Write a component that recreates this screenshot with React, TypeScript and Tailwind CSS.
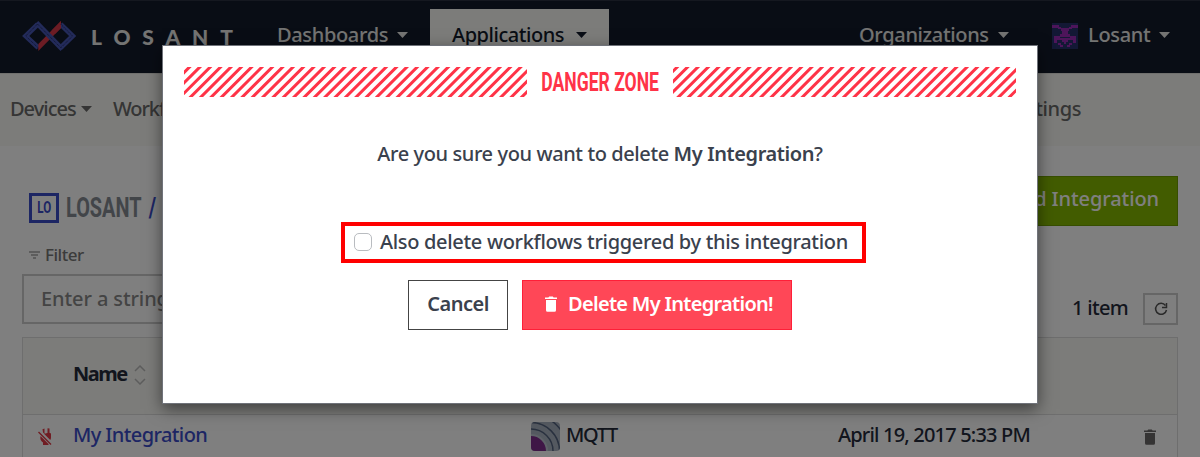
import type { ReactNode } from 'react';

function Caret({ className = '' }: { className?: string }) {
  return (
    <svg viewBox="0 0 11 6" className={`h-[6px] w-[11px] shrink-0 ${className}`} fill="currentColor">
      <path d="M0 0h11L5.5 6z" />
    </svg>
  );
}

function Logo() {
  return (
    <svg width="54" height="32" viewBox="22 20 54 32" className="shrink-0" fill="none">
      <g stroke="#4656b4" strokeWidth="5">
        <path d="M37.8 24.2 25.7 36l12.6 11.8" strokeLinejoin="miter" />
        <path d="M60.6 24.2 72.6 36 60.6 47.8" />
      </g>
      <path d="M61 21v7L38.3 51v-7z" fill="#d83848" />
      <path d="M36.5 22.8 62.3 49.2" stroke="#4656b4" strokeWidth="5" />
      <path d="m51.500 30.600 9.500-9.600v7l-6 6z" fill="#d83848" />
      <g stroke="#1a2356" strokeWidth="1" strokeDasharray="1 1">
        <path d="M37.5 24 25.7 36l12.6 12M60.6 24 72.6 36 60.6 48M37.5 24 61 48" />
      </g>
    </svg>
  );
}

function Avatar() {
  return (
    <svg width="26" height="26" viewBox="0 0 26 26" className="mt-[22px] shrink-0" fill="#9a2ab4">
      <path d="M0 0h26v26H0z" fill="#26306b" />
      <path d="M0 2h7v3H0zM19 2h7v3h-7zM6 4h3v2H6zM17 4h3v2h-3zM9 5h8v3H9zM10 8h6v4h-6zM8 11h10v3H8zM2 13h6v3H2zM18 13h6v3h-6zM5 15h16v2H5zM2 16h3v4H2zM21 16h3v4h-3zM10 17h6v2h-6zM6 20h3v2H6zM17 20h3v2h-3zM8 22h3v2H8zM15 22h3v2h-3zM12 19h2v2h-2z" />
    </svg>
  );
}

function Trash({ className = '' }: { className?: string }) {
  return (
    <svg viewBox="0 0 14 16" className={className} fill="currentColor">
      <path d="M1 1.4h3.4L5.2.4h3.6l.8 1H13V3H1zM2 4h10v10.2q0 1.6-1.5 1.6h-7Q2 15.800 2 14.200z" />
    </svg>
  );
}

const STRIPE_STEP = 10.35;

function Stripes({ offset }: { offset: number }) {
  const d = Array.from({ length: 38 }, (_, i) => {
    const x = offset + (i - 4) * STRIPE_STEP;
    return `M${(x - 2).toFixed(2)} 32l34 -34`;
  }).join('');
  return (
    <svg width="343" height="30" className="shrink-0 overflow-hidden">
      <path d={d} stroke="#ff3347" strokeWidth="3" />
    </svg>
  );
}

function NavItem({ className = '', children }: { className?: string; children: ReactNode }) {
  return <div className={`flex items-center whitespace-nowrap ${className}`}>{children}</div>;
}

function Page() {
  return (
    <div className="flex h-full flex-col bg-white text-[20px] font-medium">
      <header className="flex h-[73px] shrink-0 items-start border-t border-[#2a3040] bg-[#121a2b] pl-[22px] text-[#e9e9e6]">
        <div className="flex h-[70px] w-[214px] items-center">
          <Logo />
          <span className="ml-[15px] font-['Lato'] text-[21px] leading-none font-black tracking-[11.9px]">LOSANT</span>
        </div>
        <NavItem className="ml-[41px] h-[68px] w-[153px] tracking-[-0.35px]">
          Dashboards <Caret className="ml-[9px]" />
        </NavItem>
        <NavItem className="mt-2 h-[52px] w-[179px] bg-[#f9f9f5] pl-[22px] tracking-[-0.45px] text-[#121a2b]">
          Applications <Caret className="ml-3" />
        </NavItem>
        <NavItem className="ml-[250px] h-[68px] w-[193px] tracking-[-0.35px]">
          Organizations <Caret className="ml-[9px]" />
        </NavItem>
        <Avatar />
        <NavItem className="ml-[10px] h-[68px] tracking-[-0.3px]">
          Losant <Caret className="ml-[9px]" />
        </NavItem>
      </header>

      <nav className="flex h-[73px] shrink-0 items-center justify-between border-t border-[#e0e0dc] bg-[#f9f9f4] pr-[119px] pb-[2px] pl-[10px] text-[#6a6a6a]">
        <div className="flex items-center">
          <NavItem className="w-[103px] tracking-[-1px]">
            Devices <Caret className="ml-[5px]" />
          </NavItem>
          <NavItem className="tracking-[-1.1px]">Workflows</NavItem>
        </div>
        <NavItem className="tracking-[-0.4px]">Settings</NavItem>
      </nav>

      <main className="flex flex-col px-[22px]">
        <div className="flex h-[91px] items-start justify-between">
          <div className="mt-[47px] flex items-center pl-[7px]">
            <div className="flex size-[30px] items-center justify-center border-[3px] border-[#3b4cc8] font-['Roboto'] text-[17px] font-bold text-[#3b4cc8]">
              <span className="scale-x-[0.68]">LO</span>
            </div>
            <div className="ml-[7px] w-[96px] origin-left scale-x-[0.71] font-['Roboto'] text-[28px] leading-[30px] font-bold whitespace-nowrap text-[#858b93]">
              LOSANT <span className="ml-1 text-[#3b4cc8]">/</span>
            </div>
          </div>
          <button className="mt-[30px] flex h-[50px] items-center border border-[#6f9c00] bg-[#84b800] px-[18px] pb-1 tracking-[-0.1px] whitespace-nowrap text-white">
            Add Integration
          </button>
        </div>

        <div className="flex items-start justify-between">
          <div className="flex flex-col">
            <div className="flex h-[36px] items-center gap-[5px] pl-[7px] text-[17px] tracking-[-0.5px] text-[#777]">
              <svg width="11" height="8" viewBox="0 0 11 8" stroke="currentColor" strokeWidth="1.2">
                <path d="M0 1h11M2 4h7M4 7h3" />
              </svg>
              Filter
            </div>
            <div className="mt-px flex h-[50px] w-[320px] items-center border-2 border-[#ccc] pl-[17px] tracking-[-0.1px] text-[#888]">
              Enter a string to filter
            </div>
          </div>
          <div className="mt-[56px] flex h-[32px] items-center tracking-[-0.7px] text-[#252b3b]">
            <span className="pb-[2px]">1 item</span>
            <span className="ml-[15px] flex h-[32px] w-[35px] items-center justify-center border-2 border-[#ccc] text-[#555]">
              <svg width="14" height="14" viewBox="0 0 14 14" fill="none" stroke="currentColor" strokeWidth="1.5">
                <path d="M11.500 3.500a5.500 5.500 0 1 0 1 4.500" />
                <path d="M12.500 1v4.500H8" />
              </svg>
            </span>
          </div>
        </div>

        <div className="mt-[12px] flex flex-col border border-[#ddd] text-[#252b3b]">
          <div className="flex h-[77px] shrink-0 items-center border-b border-[#ddd] bg-[#f9f9f4] pb-[5px] pl-[50px] font-bold tracking-[-1.5px]">
            Name
            <svg width="12" height="20" viewBox="0 0 12 20" className="mt-[3px] ml-[7px]" fill="none" stroke="#bbb" strokeWidth="1.5">
              <path d="m1 6 5-5 5 5M1 14l5 5 5-5" />
            </svg>
          </div>
          <div className="flex h-[43px] items-center">
            <svg width="14" height="17" viewBox="0 0 14 17" className="mr-[21px] ml-[15px]" fill="#e03a46">
              <path d="m1 3.600 12.500 12.500-.9.8L0 4.500zM4.500 1.300l2-.8V6L5 4.600zM9.500.3l2 .2v4.300l1.500.6v4q0 1.600-.8 2.600L6 5.700l3.500-.8zM2.500 8l8 8v1H5v-2.500Q1.500 12 2.500 8z" />
            </svg>
            <span className="w-[458px] pb-1 tracking-[-0.6px] text-[#3b4cc8]">My Integration</span>
            <svg width="29" height="29" viewBox="0 0 29 29" className="mr-[6px] shrink-0">
              <defs>
                <clipPath id="tile">
                  <rect width="29" height="29" rx="4" />
                </clipPath>
              </defs>
              <g clipPath="url(#tile)">
                <rect width="29" height="29" fill="#a9b2c0" />
                <g fill="none" stroke="#53637f" strokeWidth="1.5">
                  <circle cx="0" cy="29" r="22" />
                  <circle cx="0" cy="29" r="28.500" />
                  <circle cx="1" cy="28" r="35" />
                </g>
                <circle cx="0" cy="29" r="16" fill="#7e2d8d" stroke="#bdc5d0" strokeWidth="2" />
              </g>
            </svg>
            <span className="w-[272px] pb-1 tracking-[-1.4px]">MQTT</span>
            <span className="w-[305px] pb-1 tracking-[-0.82px] whitespace-nowrap">April 19, 2017 5:33 PM</span>
            <Trash className="h-[16px] w-[14px] text-[#6a6868]" />
          </div>
        </div>
      </main>
    </div>
  );
}

function Dialog() {
  return (
    <div className="mx-auto mt-[45px] flex h-[359px] w-[876px] flex-col items-center border border-[#101522]/60 bg-white text-[20px] font-medium text-[#3a414d] shadow-[0_5px_15px_rgba(0,0,0,0.5)]">
      <div className="mt-[21px] flex h-[30px] items-center">
        <Stripes offset={6.6} />
        <h2 className="flex w-[146px] justify-center font-['Roboto'] text-[26px] leading-[30px] font-bold whitespace-nowrap text-[#ff3347]">
          <span className="scale-x-[0.675]">DANGER ZONE</span>
        </h2>
        <Stripes offset={5.3} />
      </div>
      <p className="mt-[42px] leading-[30px] tracking-[-0.4px] whitespace-nowrap">
        Are you sure you want to delete <b className="font-semibold">My Integration</b>?
      </p>
      <label className="mt-[53px] ml-[7px] flex h-[41px] w-[525px] shrink-0 items-center border-4 border-[#f00] pl-[9px] tracking-[-0.32px] whitespace-nowrap">
        <span className="mr-[8px] mb-px size-[18px] rounded-[5px] border border-[#b9bcc0] bg-white" />
        <span className="pb-px">Also delete workflows triggered by this integration</span>
      </label>
      <div className="mt-[17px] flex gap-[14px] font-semibold">
        <button className="h-[50px] w-[100px] border border-[#444] pb-[2px] tracking-[-0.5px]">Cancel</button>
        <button className="flex h-[50px] w-[270px] items-center border border-[#ff1f38] bg-[#ff4757] pb-[2px] pl-[21px] tracking-[-0.7px] whitespace-nowrap text-white">
          <Trash className="mr-[10px] h-[16px] w-[14px]" />
          Delete My Integration!
        </button>
      </div>
    </div>
  );
}

export default function App() {
  return (
    <div className="relative h-[457px] w-[1200px] overflow-hidden font-['Noto_Sans',sans-serif]">
      <Page />
      <div className="absolute inset-0 bg-black/50">
        <Dialog />
      </div>
    </div>
  );
}
